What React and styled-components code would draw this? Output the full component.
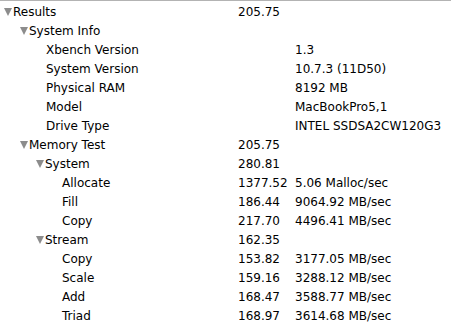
import React from 'react';
import styled, { createGlobalStyle } from 'styled-components';

const GlobalStyle = createGlobalStyle`
	html, body {
		margin: 0;
		padding: 0;
		background: #fff;
	}
	body {
		font-family: 'DejaVu Sans', 'Verdana', sans-serif;
		font-size: 12px;
		color: #000;
	}
`;

const Outline = styled.div`
	width: 451px;
	height: 327px;
	padding-top: 1px;
	border-top: 1px solid #b3b3b3;
	box-sizing: border-box;
	overflow: hidden;
`;

const Row = styled.div`
	display: grid;
	grid-template-columns: 238px 57px 1fr;
	height: 19px;
	align-items: center;
	white-space: nowrap;
`;

const Label = styled.div`
	display: flex;
	align-items: center;
	padding-left: ${(p) => 4 + p.$level * 16}px;
`;

const Toggle = styled.span`
	display: inline-block;
	width: 0;
	height: 0;
	margin-right: 1px;
	border-left: 4.5px solid transparent;
	border-right: 4.5px solid transparent;
	border-top: 8px solid #8c8c8c;
	flex: none;
`;

const Spacer = styled.span`
	display: inline-block;
	width: 10px;
	flex: none;
`;

const Value = styled.div``;

const Detail = styled.div``;

const rows = [
	{ level: 0, name: 'Results', open: true, value: '205.75' },
	{ level: 1, name: 'System Info', open: true },
	{ level: 2, name: 'Xbench Version', detail: '1.3' },
	{ level: 2, name: 'System Version', detail: '10.7.3 (11D50)' },
	{ level: 2, name: 'Physical RAM', detail: '8192 MB' },
	{ level: 2, name: 'Model', detail: 'MacBookPro5,1' },
	{ level: 2, name: 'Drive Type', detail: 'INTEL SSDSA2CW120G3' },
	{ level: 1, name: 'Memory Test', open: true, value: '205.75' },
	{ level: 2, name: 'System', open: true, value: '280.81' },
	{ level: 3, name: 'Allocate', value: '1377.52', detail: '5.06 Malloc/sec' },
	{ level: 3, name: 'Fill', value: '186.44', detail: '9064.92 MB/sec' },
	{ level: 3, name: 'Copy', value: '217.70', detail: '4496.41 MB/sec' },
	{ level: 2, name: 'Stream', open: true, value: '162.35' },
	{ level: 3, name: 'Copy', value: '153.82', detail: '3177.05 MB/sec' },
	{ level: 3, name: 'Scale', value: '159.16', detail: '3288.12 MB/sec' },
	{ level: 3, name: 'Add', value: '168.47', detail: '3588.77 MB/sec' },
	{ level: 3, name: 'Triad', value: '168.97', detail: '3614.68 MB/sec' },
];

export default function App() {
	return (
		<>
			<GlobalStyle />
			<Outline>
				{rows.map((r, i) => (
					<Row key={i}>
						<Label $level={r.level}>
							{r.open ? <Toggle /> : <Spacer />}
							{r.name}
						</Label>
						<Value>{r.value || ''}</Value>
						<Detail>{r.detail || ''}</Detail>
					</Row>
				))}
			</Outline>
		</>
	);
}
